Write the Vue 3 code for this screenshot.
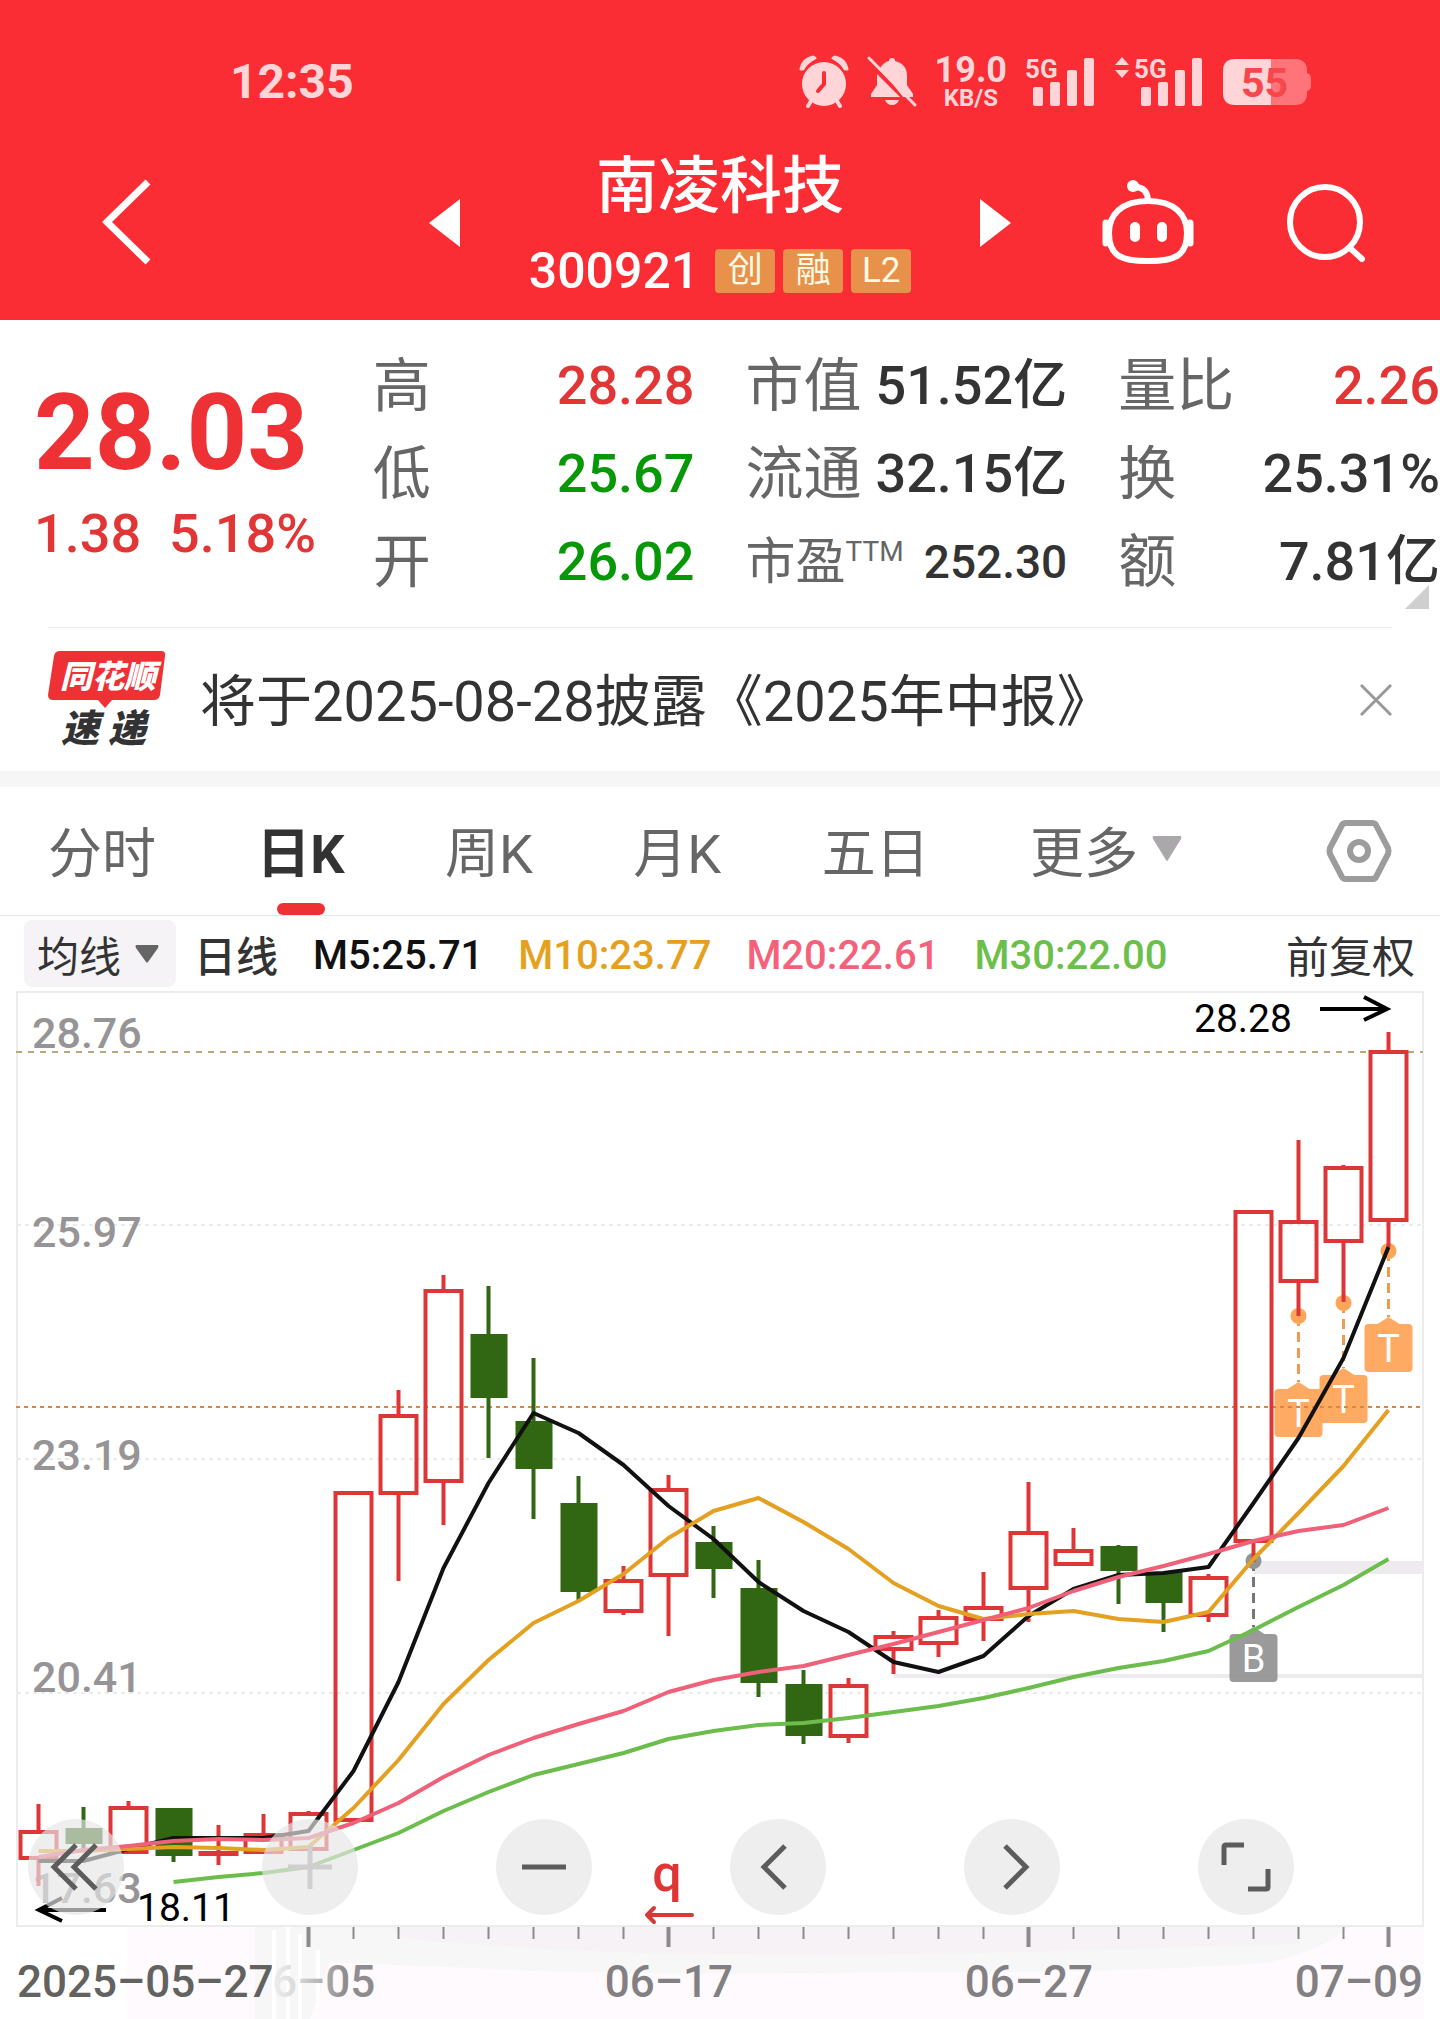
<script setup>
import { ref } from 'vue'

const quotes = [
  [
    { label: '高', value: '28.28', tone: 'up' },
    { label: '低', value: '25.67', tone: 'down' },
    { label: '开', value: '26.02', tone: 'down' },
  ],
  [
    { label: '市值', value: '51.52亿' },
    { label: '流通', value: '32.15亿' },
    { label: '市盈', sup: 'TTM', value: '252.30', small: true },
  ],
  [
    { label: '量比', value: '2.26', tone: 'up' },
    { label: '换', value: '25.31%' },
    { label: '额', value: '7.81亿' },
  ],
]

const tabs = ['分时', '日K', '周K', '月K', '五日']
const activeTab = ref('日K')
const noticeOpen = ref(true)

const averages = [
  { text: 'M5:25.71', color: '#111111' },
  { text: 'M10:23.77', color: '#e5a11d' },
  { text: 'M20:22.61', color: '#f5617a' },
  { text: 'M30:22.00', color: '#6cc04a' },
]

const signalBars = [
  { x: 8, y: 31, h: 19 },
  { x: 25, y: 26, h: 24 },
  { x: 42, y: 14, h: 36 },
  { x: 59, y: 2, h: 48 },
]

// chart space: one day every 45 units
const dayX = (i) => 38.5 + i * 45

// [high, body top, body bottom, low, rising]
const candles = [
  [1804, 1830, 1860, 1886, 1],
  [1807, 1828, 1844, 1850, 0],
  [1801, 1806, 1854, 1854, 1],
  [1808, 1808, 1856, 1862, 0],
  [1825, 1851, 1855, 1865, 1],
  [1814, 1833, 1854, 1854, 1],
  [1811, 1812, 1851, 1851, 1],
  [1491, 1491, 1822, 1822, 1],
  [1390, 1414, 1495, 1581, 1],
  [1275, 1289, 1483, 1525, 1],
  [1286, 1334, 1398, 1458, 0],
  [1358, 1421, 1469, 1519, 0],
  [1476, 1503, 1592, 1600, 0],
  [1566, 1579, 1613, 1615, 1],
  [1475, 1488, 1577, 1636, 1],
  [1526, 1542, 1569, 1598, 0],
  [1560, 1588, 1683, 1697, 0],
  [1670, 1684, 1736, 1744, 0],
  [1678, 1684, 1738, 1743, 1],
  [1631, 1635, 1651, 1674, 1],
  [1610, 1616, 1645, 1657, 1],
  [1572, 1606, 1621, 1641, 1],
  [1482, 1531, 1590, 1622, 1],
  [1528, 1549, 1566, 1566, 1],
  [1545, 1546, 1571, 1604, 0],
  [1572, 1572, 1603, 1632, 0],
  [1574, 1576, 1617, 1622, 1],
  [1210, 1210, 1543, 1562, 1],
  [1140, 1220, 1283, 1316, 1],
  [1165, 1166, 1243, 1302, 1],
  [1032, 1050, 1222, 1247, 1],
].map(([high, top, bottom, low, rising], i) => ({ high, top, bottom, low, rising, x: dayX(i) }))

const maLines = [
  {
    color: '#111111',
    from: 0,
    ys: [1861, 1861, 1849, 1838, 1838, 1838, 1831, 1771, 1682, 1568, 1483, 1413, 1433, 1465, 1506, 1539, 1582, 1611, 1632, 1662, 1672, 1656, 1616, 1589, 1575, 1573, 1567, 1503, 1438, 1358, 1247],
  },
  {
    color: '#e3a021',
    from: 0,
    ys: [1851, 1851, 1849, 1847, 1848, 1850, 1847, 1808, 1760, 1704, 1660, 1623, 1601, 1574, 1538, 1511, 1498, 1522, 1549, 1583, 1606, 1619, 1614, 1611, 1619, 1622, 1612, 1559, 1513, 1466, 1410],
  },
  {
    color: '#ee6178',
    from: 0,
    ys: [1857, 1850, 1846, 1841, 1839, 1840, 1838, 1823, 1803, 1777, 1755, 1738, 1724, 1711, 1692, 1680, 1672, 1666, 1655, 1644, 1632, 1620, 1608, 1591, 1577, 1566, 1554, 1541, 1531, 1525, 1508],
  },
  {
    color: '#6cbd4b',
    from: 3,
    ys: [1882, 1877, 1873, 1867, 1850, 1833, 1811, 1792, 1775, 1764, 1753, 1739, 1731, 1725, 1723, 1718, 1712, 1706, 1698, 1688, 1677, 1668, 1661, 1651, 1630, 1607, 1585, 1559],
  },
].map((line) => ({
  color: line.color,
  points: line.ys.map((y, i) => `${dayX(line.from + i)},${y}`).join(' '),
}))

const priceLabels = [
  { text: '28.76', y: 1048 },
  { text: '25.97', y: 1247 },
  { text: '23.19', y: 1470 },
  { text: '20.41', y: 1692 },
  { text: '17.63', y: 1903 },
]

const marks = [
  { text: 'B', x: dayX(27), dot: 1561, tip: 1627, color: '#939593', line: '#777777' },
  { text: 'T', x: dayX(28), dot: 1316, tip: 1382, color: '#ffa55a', line: '#ee9a50' },
  { text: 'T', x: dayX(29), dot: 1303, tip: 1368, color: '#ffa55a', line: '#ee9a50' },
  { text: 'T', x: dayX(30), dot: 1251, tip: 1317, color: '#ffa55a', line: '#ee9a50' },
]

const ticks = Array.from({ length: 25 }, (_, n) => ({ x: dayX(n + 6), major: n % 8 === 0 }))

const controls = [
  { name: '最早', d: 'M27 -22L5 0L27 22M7 -22L-15 0L7 22', shift: -7 },
  { name: '放大', d: 'M-22 0H22M0 -22V22', shift: 0, faded: true },
  { name: '缩小', d: 'M-22 0H22', shift: 0 },
  { name: '向左', d: 'M7 -21L-14 0L7 21', shift: 0 },
  { name: '向右', d: 'M-7 -21L14 0L-7 21', shift: 0 },
  { name: '全屏', d: 'M-22 -2V-20Q-22 -22 -20 -22H-2M2 22H20Q22 22 22 20V2', shift: 0 },
]
</script>

<template>
  <div class="page">
    <header class="top">
      <div class="status">
        <span class="clock">12:35</span>
        <div class="status-icons">
          <svg class="alarm" width="50" height="52" viewBox="0 0 50 52" aria-hidden="true">
            <path d="M2 13Q4 3 14 1L16 2Q8 6 4 13Z M48 13Q46 3 36 1L34 2Q42 6 46 13Z" stroke-width="3" stroke-linejoin="round" stroke="#ffd5d8" />
            <circle cx="25" cy="28" r="22" />
            <path d="M12 45L9 50M38 45L41 50" stroke="#ffd5d8" stroke-width="4" stroke-linecap="round" />
            <path d="M25 17V28L19 35" fill="none" stroke="#f92d33" stroke-width="4" stroke-linecap="round" />
          </svg>
          <svg class="bell" width="50" height="52" viewBox="0 0 50 52" aria-hidden="true">
            <path d="M13 12Q17 6 22 5Q22 2 25 2Q28 2 28 5Q40 8 40 20V29L46 38V41H36Z" />
            <path d="M10 18L33 41H4V38L10 29Z" />
            <path d="M18 44H32Q30 49 25 49Q20 49 18 44Z" />
            <path d="M2 2L48 49" stroke="#ffd5d8" stroke-width="3" stroke-linecap="round" />
          </svg>
          <div class="speed">
            <strong>19.0</strong>
            <span>KB/S</span>
          </div>
          <svg width="72" height="52" viewBox="0 0 72 52" role="img" aria-label="5G">
            <text x="0" y="22" font-size="26" font-weight="700">5G</text>
            <rect v-for="b in signalBars" :key="b.x" :x="b.x" :y="b.y" :height="b.h" width="10" rx="2" />
          </svg>
          <svg width="90" height="52" viewBox="-18 0 90 52" role="img" aria-label="5G">
            <path d="M-18 9L-11 1L-4 9ZM-18 14L-11 22L-4 14Z" />
            <text x="1" y="22" font-size="26" font-weight="700">5G</text>
            <rect v-for="b in signalBars" :key="b.x" :x="b.x" :y="b.y" :height="b.h" width="10" rx="2" />
          </svg>
          <svg width="88" height="46" viewBox="0 0 88 46" role="img" aria-label="55">
            <path d="M48 0H72Q84 0 84 12V14Q88 15 88 20V27Q88 31 84 32V34Q84 46 72 46H48Z" fill="#ff7479" />
            <path d="M12 0H48V46H12Q0 46 0 34V12Q0 0 12 0Z" />
            <text x="18" y="38" font-size="41" font-weight="700" class="level">55</text>
          </svg>
        </div>
      </div>

      <nav class="nav">
        <div class="nav-side">
          <button type="button" class="icon-btn" aria-label="返回">
            <svg width="50" height="88" viewBox="0 0 50 88">
              <path d="M46 3L5 43L46 83" fill="none" stroke="#fff" stroke-width="7" />
            </svg>
          </button>
        </div>
        <div class="stock">
          <button type="button" class="icon-btn" aria-label="上一只">
            <svg width="31" height="48" viewBox="0 0 31 48"><path d="M31 0V48L0 24Z" fill="#fff" /></svg>
          </button>
          <div class="stock-name">
            <h1>南凌科技</h1>
            <div class="code-row">
              <span class="code">300921</span>
              <span class="badge">创</span>
              <span class="badge">融</span>
              <span class="badge">L2</span>
            </div>
          </div>
          <button type="button" class="icon-btn" aria-label="下一只">
            <svg width="31" height="48" viewBox="0 0 31 48"><path d="M0 0V48L31 24Z" fill="#fff" /></svg>
          </button>
        </div>
        <div class="nav-side nav-tools">
          <button type="button" class="icon-btn" aria-label="助手">
            <svg width="94" height="86" viewBox="0 0 94 86" fill="none" stroke="#fff" stroke-width="6">
              <path d="M47 21C74 21 86 35 86 53C86 76 74 81 47 81C20 81 8 76 8 53C8 35 20 21 47 21Z" />
              <path d="M47 20Q46 7 34 7" />
              <circle cx="32" cy="6" r="6" fill="#fff" stroke="none" />
              <path d="M5 43V63M89 43V63" stroke-width="7" stroke-linecap="round" />
              <path d="M34 47V57M61 47V57" stroke-width="10" stroke-linecap="round" />
            </svg>
          </button>
          <button type="button" class="icon-btn" aria-label="搜索">
            <svg width="80" height="82" viewBox="0 0 80 82" fill="none" stroke="#fff" stroke-width="6">
              <circle cx="39" cy="40" r="35" />
              <path d="M64 66L76 77" stroke-linecap="round" />
            </svg>
          </button>
        </div>
      </nav>
    </header>

    <section class="quote">
      <div class="price">
        <p class="now">28.03</p>
        <p class="change"><span>1.38</span><span>5.18%</span></p>
      </div>
      <dl v-for="(group, g) in quotes" :key="g">
        <div v-for="item in group" :key="item.label" :class="{ small: item.small }">
          <dt>{{ item.label }}<sup v-if="item.sup">{{ item.sup }}</sup></dt>
          <dd :class="item.tone">{{ item.value }}</dd>
        </div>
      </dl>
      <svg class="corner" width="24" height="24" viewBox="0 0 24 24" aria-hidden="true"><path d="M24 0V24H0Z" fill="#cfcfcf" /></svg>
    </section>

    <section v-if="noticeOpen" class="notice">
      <svg class="logo" width="118" height="98" viewBox="0 0 118 98" role="img" aria-label="同花顺速递">
        <path d="M12 0H113Q118 0 117 5L112 44Q111 49 106 49H64L57 57L50 49H5Q0 49 0 44L6 5Q7 0 12 0Z" fill="#ee3135" />
        <text x="12" y="37" font-size="32" fill="#fff">同花顺</text>
        <text x="13" y="91" font-size="38" fill="#333">速</text>
        <text x="60" y="91" font-size="38" fill="#333">递</text>
      </svg>
      <a href="#" class="notice-text">将于2025-08-28披露《2025年中报》</a>
      <button type="button" class="icon-btn" aria-label="关闭" @click="noticeOpen = false">
        <svg width="32" height="32" viewBox="0 0 32 32"><path d="M1 1L31 31M31 1L1 31" stroke="#999" stroke-width="3" /></svg>
      </button>
    </section>

    <div class="tabs">
      <div class="tab-list">
        <button
          v-for="tab in tabs"
          :key="tab"
          type="button"
          class="tab"
          :class="{ active: tab === activeTab }"
          @click="activeTab = tab"
        >{{ tab }}</button>
        <button type="button" class="tab">
          更多
          <svg width="30" height="26" viewBox="0 0 30 26"><path d="M2 0H28Q30 0 29 3L16 24Q15 26 14 24L1 3Q0 0 2 0Z" fill="#aaa8ab" /></svg>
        </button>
      </div>
      <button type="button" class="icon-btn" aria-label="设置">
        <svg width="66" height="62" viewBox="0 0 66 62" fill="none" stroke="#9c9c9c" stroke-width="6">
          <path d="M20 3H46Q49 3 50 5L62 28Q63 31 62 34L50 57Q49 59 46 59H20Q17 59 16 57L4 34Q3 31 4 28L16 5Q17 3 20 3Z" />
          <circle cx="33" cy="31" r="9" />
        </svg>
      </button>
    </div>

    <div class="averages">
      <button type="button" class="ma-btn">
        均线
        <svg width="24" height="18" viewBox="0 0 24 18"><path d="M1 0H23Q24 1 23 3L13 17Q12 18 11 17L1 3Q0 1 1 0Z" fill="#656565" /></svg>
      </button>
      <span class="period">日线</span>
      <span v-for="ma in averages" :key="ma.text" class="ma" :style="{ color: ma.color }">{{ ma.text }}</span>
      <button type="button" class="adjust">前复权</button>
    </div>

    <main class="chart">
      <svg class="plot" viewBox="0 991 1440 1028" role="img" aria-label="日K线图">
        <defs>
          <linearGradient id="fade" gradientUnits="userSpaceOnUse" x1="270" y1="0" x2="345" y2="0">
            <stop offset="0" stop-color="#f0f0f0" />
            <stop offset="0.35" stop-color="#dadada" />
            <stop offset="1" stop-color="#8e8c8e" />
          </linearGradient>
        </defs>

        <rect x="127" y="1926" width="1297" height="93" fill="#fefafe" />
        <path d="M255 1926H1350Q1320 1953 1265 1963Q1100 1974 900 1972Q600 1976 470 1968L330 1962L310 2019H255Z" fill="#f7f7f7" />
        <path d="M390 1926H1300V1944Q1100 1950 900 1955Q600 1958 400 1938Z" fill="#f6f2f6" />
        <path d="M274 1930V2019M288 1926V2019M300 1934V2019M318 1950V2008" stroke="#fff" stroke-width="4" />

        <g stroke="#ebebeb" stroke-width="2" stroke-dasharray="4 4">
          <path d="M17 1225H1423M17 1459H1423M17 1693H1423" />
        </g>
        <rect x="17" y="992" width="1406" height="934" fill="none" stroke="#ececec" stroke-width="2" />
        <rect x="1254" y="1561" width="169" height="13" fill="#eeebee" />
        <rect x="894" y="1674" width="529" height="4" fill="#eeebee" />
        <path d="M16 1052H1423" stroke="#bba77d" stroke-width="2" stroke-dasharray="6 6" />

        <g class="price-labels">
          <text v-for="p in priceLabels" :key="p.text" x="32" :y="p.y">{{ p.text }}</text>
        </g>

        <g v-for="m in marks" :key="m.x">
          <path :d="`M${m.x} ${m.dot}V${m.tip}`" :stroke="m.line" stroke-width="3" stroke-dasharray="10 6" />
          <circle :cx="m.x" :cy="m.dot" r="8" :fill="m.color" />
          <path
            :d="`M${m.x - 20} ${m.tip + 7}H${m.x - 11}L${m.x} ${m.tip}L${m.x + 11} ${m.tip + 7}H${m.x + 20}Q${m.x + 24} ${m.tip + 7} ${m.x + 24} ${m.tip + 11}V${m.tip + 51}Q${m.x + 24} ${m.tip + 55} ${m.x + 20} ${m.tip + 55}H${m.x - 20}Q${m.x - 24} ${m.tip + 55} ${m.x - 24} ${m.tip + 51}V${m.tip + 11}Q${m.x - 24} ${m.tip + 7} ${m.x - 20} ${m.tip + 7}Z`"
            :fill="m.color"
            opacity="0.95"
          />
          <text class="mark" :x="m.x" :y="m.tip + 45">{{ m.text }}</text>
        </g>
        <path d="M16 1407H1423" stroke="#d98843" stroke-width="2" stroke-dasharray="4 4" />

        <g v-for="c in candles" :key="c.x">
          <template v-if="c.rising">
            <path :d="`M${c.x} ${c.high}V${c.top}M${c.x} ${c.bottom}V${c.low}`" stroke="#dd3636" stroke-width="4" />
            <rect :x="c.x - 18" :y="c.top + 2" width="36" :height="Math.max(c.bottom - c.top - 4, 1)" fill="none" stroke="#dd3636" stroke-width="4" />
          </template>
          <template v-else>
            <path :d="`M${c.x} ${c.high}V${c.low}`" stroke="#316612" stroke-width="4" />
            <rect :x="c.x - 18" :y="c.top" width="37" :height="c.bottom - c.top" fill="#316612" />
          </template>
        </g>

        <polyline v-for="l in maLines" :key="l.color" :points="l.points" :stroke="l.color" fill="none" stroke-width="4" stroke-linejoin="round" />

        <g class="extremes">
          <text x="1194" y="1032">28.28</text>
          <text x="137" y="1921">18.11</text>
          <path d="M1320 1009H1386M1364 997L1387 1009L1364 1020" fill="none" stroke="#000" stroke-width="4" />
          <path d="M106 1910H40M62 1898L39 1910L62 1921" fill="none" stroke="#000" stroke-width="4" />
        </g>

        <text class="right-mark" x="667" y="1891">q</text>
        <path d="M692 1915H647M654 1908L647 1915L654 1922" fill="none" stroke="#d93838" stroke-width="4" stroke-linecap="round" stroke-linejoin="round" />

        <path v-for="t in ticks" :key="t.x" :d="`M${t.x} 1927V${t.major ? 1947 : 1939}`" stroke="#8c8a8c" :stroke-width="t.major ? 4 : 2" />
        <g class="dates">
          <text x="272" y="1997" fill="url(#fade)">6–05</text>
          <text x="17" y="1997" fill="#62625f">2025–05–27</text>
          <text x="669" y="1997" text-anchor="middle">06–17</text>
          <text x="1029" y="1997" text-anchor="middle">06–27</text>
          <text x="1423" y="1997" text-anchor="end">07–09</text>
        </g>
      </svg>

      <div class="controls">
        <button v-for="c in controls" :key="c.name" type="button" :aria-label="c.name" :class="{ faded: c.faded }">
          <svg width="96" height="96" viewBox="-48 -48 96 96">
            <path :d="c.d" :transform="`translate(${c.shift} 0)`" />
          </svg>
        </button>
      </div>
    </main>
  </div>
</template>

<style>
body {
  margin: 0;
  background: #fff;
}
</style>

<style scoped>
.page {
  font-family: Roboto, 'Noto Sans CJK SC', sans-serif;
  color: #333;
  background: #fff;
  overflow: hidden;
}

svg {
  overflow: visible;
}

button {
  margin: 0;
  padding: 0;
  border: 0;
  background: none;
  font: inherit;
  color: inherit;
  cursor: pointer;
}

.icon-btn {
  display: flex;
}

.top {
  background: #f92d33;
  color: #fff;
}

.status {
  display: flex;
  align-items: center;
  justify-content: space-between;
  height: 76px;
  padding: 44px 129px 0 230px;
  color: #ffd5d8;
}

.clock {
  font-size: 48px;
  font-weight: 700;
  line-height: 52px;
}

.status-icons {
  display: flex;
  align-items: center;
  gap: 18px;
  fill: #ffd5d8;
}

.level {
  fill: #f5474c;
}

.speed {
  display: flex;
  flex-direction: column;
  align-items: center;
  line-height: 24px;
}

.speed strong {
  font-size: 36px;
  line-height: 32px;
}

.speed span {
  font-size: 24px;
  font-weight: 700;
}

.nav {
  display: grid;
  grid-template-columns: 1fr 582px 1fr;
  align-items: center;
  height: 194px;
  padding-top: 6px;
}

.nav-side {
  padding-left: 102px;
}

.nav-tools {
  display: flex;
  align-items: center;
  justify-content: space-between;
  padding: 0 74px 0 90px;
}

.stock {
  display: flex;
  align-items: center;
  justify-content: space-between;
}

.stock-name {
  display: flex;
  flex-direction: column;
  align-items: center;
}

h1 {
  margin: 0;
  font-size: 62px;
  font-weight: 500;
  line-height: 84px;
}

.code-row {
  display: flex;
  align-items: center;
  gap: 8px;
  height: 60px;
  padding-top: 12px;
}

.code {
  margin-right: 8px;
  font-size: 50px;
  font-weight: 500;
}

.badge {
  box-sizing: border-box;
  min-width: 60px;
  height: 44px;
  border-radius: 4px;
  background: #e8914b;
  color: #fffbe6;
  font-size: 35px;
  line-height: 43px;
  text-align: center;
}

.quote {
  position: relative;
  display: grid;
  grid-template-columns: 322fr 322fr 322fr 322fr;
  column-gap: 51px;
  padding: 22px 0 21px;
}

.price {
  padding: 30px 0 0 34px;
  color: #ee3135;
  white-space: nowrap;
}

.price p {
  margin: 0;
}

.now {
  font-size: 106px;
  font-weight: 700;
  line-height: 122px;
}

.change {
  display: flex;
  gap: 28px;
  padding-top: 10px;
  font-size: 54px;
  font-weight: 500;
  line-height: 60px;
  color: #e23636;
}

dl {
  margin: 0;
}

dl div {
  display: flex;
  align-items: center;
  justify-content: space-between;
  height: 88px;
  white-space: nowrap;
}

dt {
  font-size: 58px;
  line-height: 88px;
  color: #666;
}

dd {
  margin: 0;
  font-size: 54px;
  font-weight: 500;
  line-height: 88px;
}

.small dt {
  font-size: 50px;
}

.small dd {
  font-size: 46px;
}

sup {
  font-size: 28px;
  line-height: 28px;
}

.up {
  color: #e23636;
}

.down {
  color: #069806;
}

.corner {
  position: absolute;
  right: 11px;
  bottom: 18px;
}

.notice {
  display: flex;
  align-items: center;
  height: 143px;
  margin: 0 48px;
  border-top: 1px solid #ececec;
}

.logo {
  font-family: 'Noto Sans CJK SC', sans-serif;
  font-weight: 900;
  font-style: italic;
}

.notice-text {
  flex: 1;
  margin-left: 34px;
  padding-bottom: 6px;
  font-size: 56px;
  color: #333;
  text-decoration: none;
  white-space: nowrap;
}

.tabs {
  display: flex;
  align-items: center;
  justify-content: space-between;
  height: 128px;
  padding: 0 48px 0 48px;
  border-top: 16px solid #f6f6f6;
  border-bottom: 1px solid #e8e8e8;
}

.tab-list {
  display: flex;
  flex: 0 1 1134px;
  justify-content: space-between;
}

.tab {
  position: relative;
  display: flex;
  align-items: center;
  gap: 14px;
  height: 128px;
  padding-bottom: 4px;
  font-size: 54px;
  color: #666;
}

.tab.active {
  font-weight: 700;
  color: #333;
}

.tab.active::after {
  content: '';
  position: absolute;
  left: calc(50% - 24px);
  bottom: 0;
  width: 48px;
  height: 12px;
  border-radius: 6px;
  background: #ee3135;
}

.averages {
  display: flex;
  align-items: center;
  height: 75px;
  padding: 0 25px 0 24px;
  white-space: nowrap;
}

.ma-btn {
  display: flex;
  align-items: center;
  gap: 14px;
  height: 67px;
  padding: 0 17px 0 13px;
  border-radius: 8px;
  background: #f6f3f7;
  font-size: 42px;
}

.period {
  margin-left: 18px;
  font-size: 42px;
  font-weight: 500;
}

.ma {
  margin-left: 35px;
  padding-top: 4px;
  font-size: 40px;
  font-weight: 500;
}

.adjust {
  margin-left: auto;
  font-size: 43px;
}

.chart {
  position: relative;
}

.plot {
  display: block;
  width: 100%;
}

.price-labels {
  font-size: 43px;
  font-weight: 500;
  fill: #969496;
}

.mark {
  font-size: 38px;
  fill: #fff;
  text-anchor: middle;
}

.extremes {
  font-size: 39px;
  fill: #000;
}

.right-mark {
  font-size: 52px;
  font-weight: 500;
  fill: #e03535;
  text-anchor: middle;
}

.dates {
  font-size: 44px;
  font-weight: 500;
  fill: #828082;
}

.controls {
  position: absolute;
  left: 28px;
  right: 146px;
  bottom: 104px;
  display: flex;
  justify-content: space-between;
}

.controls button {
  display: flex;
  border-radius: 50%;
  background: rgba(230, 230, 230, 0.67);
}

.controls path {
  fill: none;
  stroke: #5c5c5c;
  stroke-width: 5;
}

.controls .faded path {
  stroke: #cfcfcf;
}
</style>
